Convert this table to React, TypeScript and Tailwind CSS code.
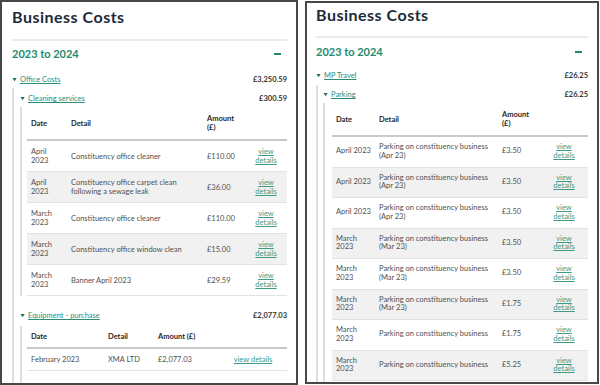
import React from "react";

type Row = { date: string; detail: string; amount: string };

const cleaning: Row[] = [
  { date: "April 2023", detail: "Constituency office cleaner", amount: "£110.00" },
  { date: "April 2023", detail: "Constituency office carpet clean following a sewage leak", amount: "£36.00" },
  { date: "March 2023", detail: "Constituency office cleaner", amount: "£110.00" },
  { date: "March 2023", detail: "Constituency office window clean", amount: "£15.00" },
  { date: "March 2023", detail: "Banner April 2023", amount: "£29.59" },
];

const equipment: Row[] = [
  { date: "February 2023", detail: "XMA LTD", amount: "£2,077.03" },
];

const parking: Row[] = [
  { date: "April 2023", detail: "Parking on constituency business (Apr 23)", amount: "£3.50" },
  { date: "April 2023", detail: "Parking on constituency business (Apr 23)", amount: "£3.50" },
  { date: "April 2023", detail: "Parking on constituency business (Apr 23)", amount: "£3.50" },
  { date: "March 2023", detail: "Parking on constituency business (Mar 23)", amount: "£3.50" },
  { date: "March 2023", detail: "Parking on constituency business (Mar 23)", amount: "£3.50" },
  { date: "March 2023", detail: "Parking on constituency business (Mar 23)", amount: "£1.75" },
  { date: "March 2023", detail: "Parking on constituency business", amount: "£1.75" },
  { date: "March 2023", detail: "Parking on constituency business", amount: "£5.25" },
];

const Caret = () => (
  <svg width="8" height="4" viewBox="0 0 8 4" className="shrink-0">
    <path d="M0.5 0h4.2L2.6 3.2z" fill="#1d6f5c" />
  </svg>
);

const Toggle = ({ label, total }: { label: string; total: string }) => (
  <div className="flex items-center justify-between leading-[10px]">
    <span className="flex items-center">
      <Caret />
      <a className="cursor-pointer text-[#2b8c77] underline underline-offset-[1px]">{label}</a>
    </span>
    <span className="font-bold text-[#333]">{total}</span>
  </div>
);

type TableProps = {
  rows: Row[];
  widths: [string, string, string, string];
  head: string;
  cell: string;
  view: string;
};

const CostTable = ({ rows, widths, head, cell, view }: TableProps) => (
  <table className="w-full table-fixed text-left">
    <thead>
      <tr className="text-[#262626]">
        <th className={`${widths[0]} ${head} border-b-2 border-[#c9c9c9] px-[4px] font-bold`}>Date</th>
        <th className={`${widths[1]} ${head} border-b-2 border-[#c9c9c9] px-[4px] font-bold`}>Detail</th>
        <th className={`${widths[2]} ${head} border-b-2 border-[#c9c9c9] px-[4px] font-bold`}>Amount (£)</th>
        <th className={`${widths[3]} ${head} border-b-2 border-[#c9c9c9]`}></th>
      </tr>
    </thead>
    <tbody>
      {rows.map((r, i) => (
        <tr key={i} className={i % 2 === 1 ? "bg-[#f1f1f1]" : "bg-white"}>
          <td className={`${cell} border-b border-[#e2e2e2] px-[4px]`}>{r.date}</td>
          <td className={`${cell} border-b border-[#e2e2e2] px-[4px]`}>{r.detail}</td>
          <td className={`${cell} border-b border-[#e2e2e2] px-[4px]`}>{r.amount}</td>
          <td className={`${cell} ${view} border-b border-[#e2e2e2] text-center`}>
            <a className="cursor-pointer text-[#3a9b86] underline underline-offset-[1px]">view details</a>
          </td>
        </tr>
      ))}
    </tbody>
  </table>
);

const Heading = ({ top, rule, year }: { top: string; rule: string; year: string }) => (
  <>
    <h1 className={`${top} text-[16px] font-bold leading-[20px] tracking-[0.5px] text-[#1c2a3a]`}>Business Costs</h1>
    <div className={`${rule} h-[2px] bg-[#ececec]`} />
    <div className={`${year} flex items-center justify-between`}>
      <h2 className="text-[11px] font-bold leading-[14px] text-[#1e8a6e]">2023 to 2024</h2>
      <span className="mr-[6px] h-[2px] w-[7px] bg-[#1e8a6e]" />
    </div>
  </>
);

export default function App() {
  return (
    <div
      className="flex h-[385px] w-[600px] gap-[7px] overflow-hidden bg-white text-[7.5px] text-[#505050]"
      style={{ fontFamily: "Lato, 'Open Sans', sans-serif" }}
    >
      {/* left panel */}
      <section className="h-[385px] w-[298px] shrink-0 overflow-hidden border-2 border-[#474747] pl-[10px] pr-[9px]">
        <Heading top="pt-[5px]" rule="mt-[12px]" year="mt-[6px]" />
        <div className="mt-[14px]">
          <Toggle label="Office Costs" total="£3,250.59" />
        </div>
        <div className="mt-[3px] border-l-2 border-[#dedede] pb-[30px] pl-[6px] pt-[6px]">
          <Toggle label="Cleaning services" total="£300.59" />
          <div className="mt-[3px] border-l-2 border-[#dedede] pl-[5px]">
            <CostTable
              rows={cleaning}
              widths={["w-[40px]", "w-[136px]", "w-[42px]", "w-[42px]"]}
              head="pt-[7px] pb-[7px] leading-[9px]"
              cell="py-[6px] leading-[9px]"
              view="px-[4px]"
            />
          </div>
          <div className="mt-[15px]">
            <Toggle label="Equipment - purchase" total="£2,077.03" />
          </div>
          <div className="mt-[5px] border-l-2 border-[#dedede] pb-[30px] pl-[5px]">
            <CostTable
              rows={equipment}
              widths={["w-[77px]", "w-[50px]", "w-[65px]", "w-[68px]"]}
              head="py-[6px] leading-[9px]"
              cell="py-[6px] leading-[9px]"
              view="px-[4px]"
            />
          </div>
        </div>
      </section>

      {/* right panel */}
      <section className="mt-[1px] h-[383px] w-[294px] shrink-0 overflow-hidden border-2 border-[#474747] pl-[9px] pr-[9px]">
        <Heading top="pt-[2px]" rule="mt-[11px]" year="mt-[7px]" />
        <div className="mt-[12px]">
          <Toggle label="MP Travel" total="£26.25" />
        </div>
        <div className="mt-[4px] border-l-2 border-[#dedede] pb-[30px] pl-[5px] pt-[5px]">
          <Toggle label="Parking" total="£26.25" />
          <div className="mt-[3px] border-l-2 border-[#dedede] pb-[30px] pl-[7px]">
            <CostTable
              rows={parking}
              widths={["w-[43px]", "w-[123px]", "w-[42px]", "w-[48px]"]}
              head="pt-[7px] pb-[7px] leading-[9px]"
              cell="py-[6px] leading-[8.75px]"
              view="px-[7px]"
            />
          </div>
        </div>
      </section>
    </div>
  );
}
